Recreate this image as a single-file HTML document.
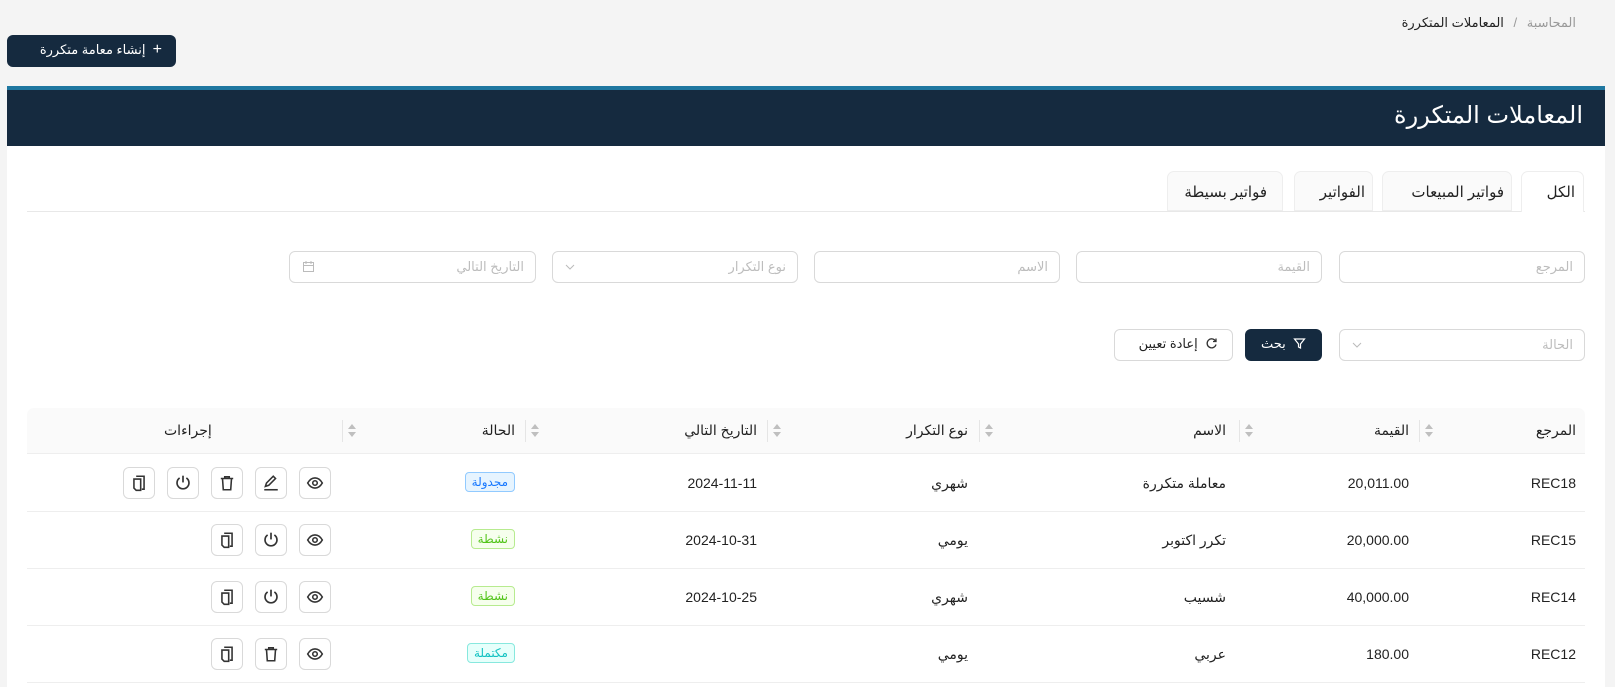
<!DOCTYPE html>
<html><head><meta charset="utf-8"><style>
*{box-sizing:border-box;margin:0;padding:0}
body{width:1615px;height:687px;overflow:hidden;background:#f4f4f4;font-family:"Liberation Sans","DejaVu Sans",sans-serif;color:#222;position:relative;font-size:14px}
.a{position:absolute}
.r{position:absolute;direction:rtl;white-space:nowrap}
.card{position:absolute;left:7px;top:86px;width:1598px;height:601px;background:#fff}
.inp{position:absolute;height:32px;border:1px solid #d9d9d9;border-radius:6px;background:#fff}
.ph{position:absolute;right:11px;top:7px;color:#bdbdbd;direction:rtl;font-size:13px}
.btn{position:absolute;width:32px;height:32px;border:1px solid #d9d9d9;border-radius:6px;background:#fff;display:flex;align-items:center;justify-content:center}
.hline{position:absolute;left:27px;width:1558px;height:1px;background:#eee}
.div{position:absolute;width:1px;height:22px;background:#e5e5e5}
.badge{position:absolute;height:20px;padding:0 6px;border:1px solid;border-radius:4px;font-size:12px;line-height:18px;direction:rtl}
</style></head><body>
<div class="r" style="right:39px;top:15px;font-size:13px;color:#999">المحاسبة <span style="margin:0 6px">/</span> <span style="color:#222">المعاملات المتكررة</span></div>
<div class="a" style="left:7px;top:35px;width:169px;height:32px;background:#152a3f;border-radius:6px;color:#fff;font-size:13px;direction:rtl;padding:7px 14px 0 0;text-align:right"><span style="font-size:16px;line-height:13px">+</span>&nbsp; إنشاء معامة متكررة</div>
<div class="card"></div>
<div class="a" style="left:7px;top:86px;width:1598px;height:4px;background:#1f77a0"></div>
<div class="a" style="left:7px;top:90px;width:1598px;height:56px;background:#152a3f"></div>
<div class="r" style="right:32px;top:101px;font-size:24px;color:#fff">المعاملات المتكررة</div>
<!-- tabs -->
<div class="a" style="left:27px;top:211px;width:1558px;height:1px;background:#e8e8e8"></div>
<div class="a" style="left:1521px;top:171px;width:63px;height:41px;background:#fff;border:1px solid #eee;border-bottom:none;border-radius:7px 7px 0 0"></div>
<div class="r" style="right:40px;top:183px;font-size:15px">الكل</div>
<div class="a" style="left:1382px;top:171px;width:130px;height:40px;background:#fafafa;border:1px solid #eee;border-radius:7px 7px 0 0"></div>
<div class="r" style="right:111px;top:183px;font-size:15px">فواتير المبيعات</div>
<div class="a" style="left:1294px;top:171px;width:79px;height:40px;background:#fafafa;border:1px solid #eee;border-radius:7px 7px 0 0"></div>
<div class="r" style="right:250px;top:183px;font-size:15px">الفواتير</div>
<div class="a" style="left:1167px;top:171px;width:116px;height:40px;background:#fafafa;border:1px solid #eee;border-radius:7px 7px 0 0"></div>
<div class="r" style="right:348px;top:183px;font-size:15px">فواتير بسيطة</div>
<!-- filters -->
<div class="inp" style="left:1339px;top:251px;width:246px"><span class="ph">المرجع</span></div>
<div class="inp" style="left:1076px;top:251px;width:246px"><span class="ph">القيمة</span></div>
<div class="inp" style="left:814px;top:251px;width:246px"><span class="ph">الاسم</span></div>
<div class="inp" style="left:552px;top:251px;width:246px"><span class="ph">نوع التكرار</span><svg class="a" style="left:12px;top:11px" width="10" height="8" viewBox="0 0 10 8"><path d="M1 2l4 4 4-4" fill="none" stroke="#bbb"/></svg></div>
<div class="inp" style="left:289px;top:251px;width:247px"><span class="ph">التاريخ التالي</span><svg class="a" style="left:12px;top:8px" width="13" height="13" viewBox="0 0 13 13"><rect x="1.5" y="2.5" width="10" height="9" fill="none" stroke="#bbb"/><path d="M1.5 5.5h10M4 1v3M9 1v3" stroke="#bbb"/></svg></div>
<div class="inp" style="left:1339px;top:329px;width:246px"><span class="ph">الحالة</span><svg class="a" style="left:12px;top:11px" width="10" height="8" viewBox="0 0 10 8"><path d="M1 2l4 4 4-4" fill="none" stroke="#bbb"/></svg></div>
<div class="a" style="left:1245px;top:329px;width:77px;height:32px;background:#152a3f;border-radius:6px;color:#fff;font-size:13px;direction:rtl;padding:7px 16px 0 0"><svg style="vertical-align:-2px" width="13" height="13" viewBox="0 0 13 13"><path d="M1.5 2h10l-4 5v4l-2 -1v-3z" fill="none" stroke="#fff" stroke-width="1.2"/></svg>&nbsp; بحث</div>
<div class="a" style="left:1114px;top:329px;width:119px;height:32px;border:1px solid #d9d9d9;border-radius:6px;font-size:13px;direction:rtl;padding:6px 14px 0 0;background:#fff"><svg style="vertical-align:-2px" width="13" height="13" viewBox="0 0 13 13"><path d="M10.5 4A4.5 4.5 0 1 0 11 7.5" fill="none" stroke="#333" stroke-width="1.3"/><path d="M11 1.5v3h-3" fill="none" stroke="#333" stroke-width="1.3"/></svg>&nbsp; إعادة تعيين</div>
<!-- table header -->
<div class="a" style="left:27px;top:408px;width:1558px;height:46px;background:#fafafa;border-radius:7px 7px 0 0;border-bottom:1px solid #eee"></div>
<div class="r" style="right:39px;top:422px">المرجع</div>
<div class="r" style="right:206px;top:422px">القيمة</div>
<div class="r" style="right:389px;top:422px">الاسم</div>
<div class="r" style="right:647px;top:422px">نوع التكرار</div>
<div class="r" style="right:858px;top:422px">التاريخ التالي</div>
<div class="r" style="right:1100px;top:422px">الحالة</div>
<div class="r" style="left:164px;top:422px">إجراءات</div>
<div class="div" style="left:1419px;top:420px"></div>
<div class="div" style="left:1239px;top:420px"></div>
<div class="div" style="left:979px;top:420px"></div>
<div class="div" style="left:767px;top:420px"></div>
<div class="div" style="left:525px;top:420px"></div>
<div class="div" style="left:342px;top:420px"></div>
<svg class="a" style="left:1424px;top:423px" width="10" height="15" viewBox="0 0 10 15"><path d="M5 1l4 5H1zM5 14l4-5H1z" fill="#bfbfbf"/></svg>
<svg class="a" style="left:1244px;top:423px" width="10" height="15" viewBox="0 0 10 15"><path d="M5 1l4 5H1zM5 14l4-5H1z" fill="#bfbfbf"/></svg>
<svg class="a" style="left:984px;top:423px" width="10" height="15" viewBox="0 0 10 15"><path d="M5 1l4 5H1zM5 14l4-5H1z" fill="#bfbfbf"/></svg>
<svg class="a" style="left:772px;top:423px" width="10" height="15" viewBox="0 0 10 15"><path d="M5 1l4 5H1zM5 14l4-5H1z" fill="#bfbfbf"/></svg>
<svg class="a" style="left:530px;top:423px" width="10" height="15" viewBox="0 0 10 15"><path d="M5 1l4 5H1zM5 14l4-5H1z" fill="#bfbfbf"/></svg>
<svg class="a" style="left:347px;top:423px" width="10" height="15" viewBox="0 0 10 15"><path d="M5 1l4 5H1zM5 14l4-5H1z" fill="#bfbfbf"/></svg>
<!-- row lines -->
<div class="hline" style="top:511px"></div>
<div class="hline" style="top:568px"></div>
<div class="hline" style="top:625px"></div>
<div class="hline" style="top:682px"></div>
<!-- rows -->
<div class="r" style="right:39px;top:475px">REC18</div>
<div class="r" style="right:206px;top:475px">20,011.00</div>
<div class="r" style="right:389px;top:475px">معاملة متكررة</div>
<div class="r" style="right:647px;top:475px">شهري</div>
<div class="r" style="right:858px;top:475px">2024-11-11</div>
<div class="badge" style="right:1100px;top:472px;background:#e6f4ff;border-color:#91caff;color:#1677ff">مجدولة</div>

<div class="r" style="right:39px;top:532px">REC15</div>
<div class="r" style="right:206px;top:532px">20,000.00</div>
<div class="r" style="right:389px;top:532px">تكرر اكتوبر</div>
<div class="r" style="right:647px;top:532px">يومي</div>
<div class="r" style="right:858px;top:532px">2024-10-31</div>
<div class="badge" style="right:1100px;top:529px;background:#f6ffed;border-color:#b7eb8f;color:#52c41a">نشطة</div>

<div class="r" style="right:39px;top:589px">REC14</div>
<div class="r" style="right:206px;top:589px">40,000.00</div>
<div class="r" style="right:389px;top:589px">شسيب</div>
<div class="r" style="right:647px;top:589px">شهري</div>
<div class="r" style="right:858px;top:589px">2024-10-25</div>
<div class="badge" style="right:1100px;top:586px;background:#f6ffed;border-color:#b7eb8f;color:#52c41a">نشطة</div>

<div class="r" style="right:39px;top:646px">REC12</div>
<div class="r" style="right:206px;top:646px">180.00</div>
<div class="r" style="right:389px;top:646px">عربي</div>
<div class="r" style="right:647px;top:646px">يومي</div>
<div class="badge" style="right:1100px;top:643px;background:#e6fffb;border-color:#87e8de;color:#13c2c2">مكتملة</div>

<!-- action icons -->
<svg width="0" height="0" style="position:absolute"><defs>
<g id="eye"><path d="M1.5 8C3.5 4.5 5.5 3.5 8 3.5S12.5 4.5 14.5 8C12.5 11.5 10.5 12.5 8 12.5S3.5 11.5 1.5 8z" fill="none" stroke="#333" stroke-width="1.4"/><circle cx="8" cy="8" r="2" fill="none" stroke="#333" stroke-width="1.4"/></g>
<g id="edit"><path d="M3 11l1-3 6-6 2 2-6 6z" fill="none" stroke="#333" stroke-width="1.4"/><path d="M2 14h12" stroke="#333" stroke-width="1.4"/></g>
<g id="del"><path d="M2.5 4h11M6 4V2.5h4V4M4 4l.7 10h6.6L12 4" fill="none" stroke="#333" stroke-width="1.4"/></g>
<g id="pow"><path d="M8 1.5v6" stroke="#333" stroke-width="1.5"/><path d="M5 3.5A5.3 5.3 0 1 0 11 3.5" fill="none" stroke="#333" stroke-width="1.5"/></g>
<g id="copy"><path d="M5.5 2h7v11.5h-2" fill="none" stroke="#333" stroke-width="1.4"/><path d="M3.5 4.5h6v10h-4l-2-2z" fill="none" stroke="#333" stroke-width="1.4"/></g>
</defs></svg>
<div class="btn" style="left:299px;top:467px"><svg width="18" height="18" viewBox="0 0 16 16"><use href="#eye"/></svg></div>
<div class="btn" style="left:255px;top:467px"><svg width="18" height="18" viewBox="0 0 16 16"><use href="#edit"/></svg></div>
<div class="btn" style="left:211px;top:467px"><svg width="18" height="18" viewBox="0 0 16 16"><use href="#del"/></svg></div>
<div class="btn" style="left:167px;top:467px"><svg width="18" height="18" viewBox="0 0 16 16"><use href="#pow"/></svg></div>
<div class="btn" style="left:123px;top:467px"><svg width="18" height="18" viewBox="0 0 16 16"><use href="#copy"/></svg></div>

<div class="btn" style="left:299px;top:524px"><svg width="18" height="18" viewBox="0 0 16 16"><use href="#eye"/></svg></div>
<div class="btn" style="left:255px;top:524px"><svg width="18" height="18" viewBox="0 0 16 16"><use href="#pow"/></svg></div>
<div class="btn" style="left:211px;top:524px"><svg width="18" height="18" viewBox="0 0 16 16"><use href="#copy"/></svg></div>

<div class="btn" style="left:299px;top:581px"><svg width="18" height="18" viewBox="0 0 16 16"><use href="#eye"/></svg></div>
<div class="btn" style="left:255px;top:581px"><svg width="18" height="18" viewBox="0 0 16 16"><use href="#pow"/></svg></div>
<div class="btn" style="left:211px;top:581px"><svg width="18" height="18" viewBox="0 0 16 16"><use href="#copy"/></svg></div>

<div class="btn" style="left:299px;top:638px"><svg width="18" height="18" viewBox="0 0 16 16"><use href="#eye"/></svg></div>
<div class="btn" style="left:255px;top:638px"><svg width="18" height="18" viewBox="0 0 16 16"><use href="#del"/></svg></div>
<div class="btn" style="left:211px;top:638px"><svg width="18" height="18" viewBox="0 0 16 16"><use href="#copy"/></svg></div>
</body></html>
